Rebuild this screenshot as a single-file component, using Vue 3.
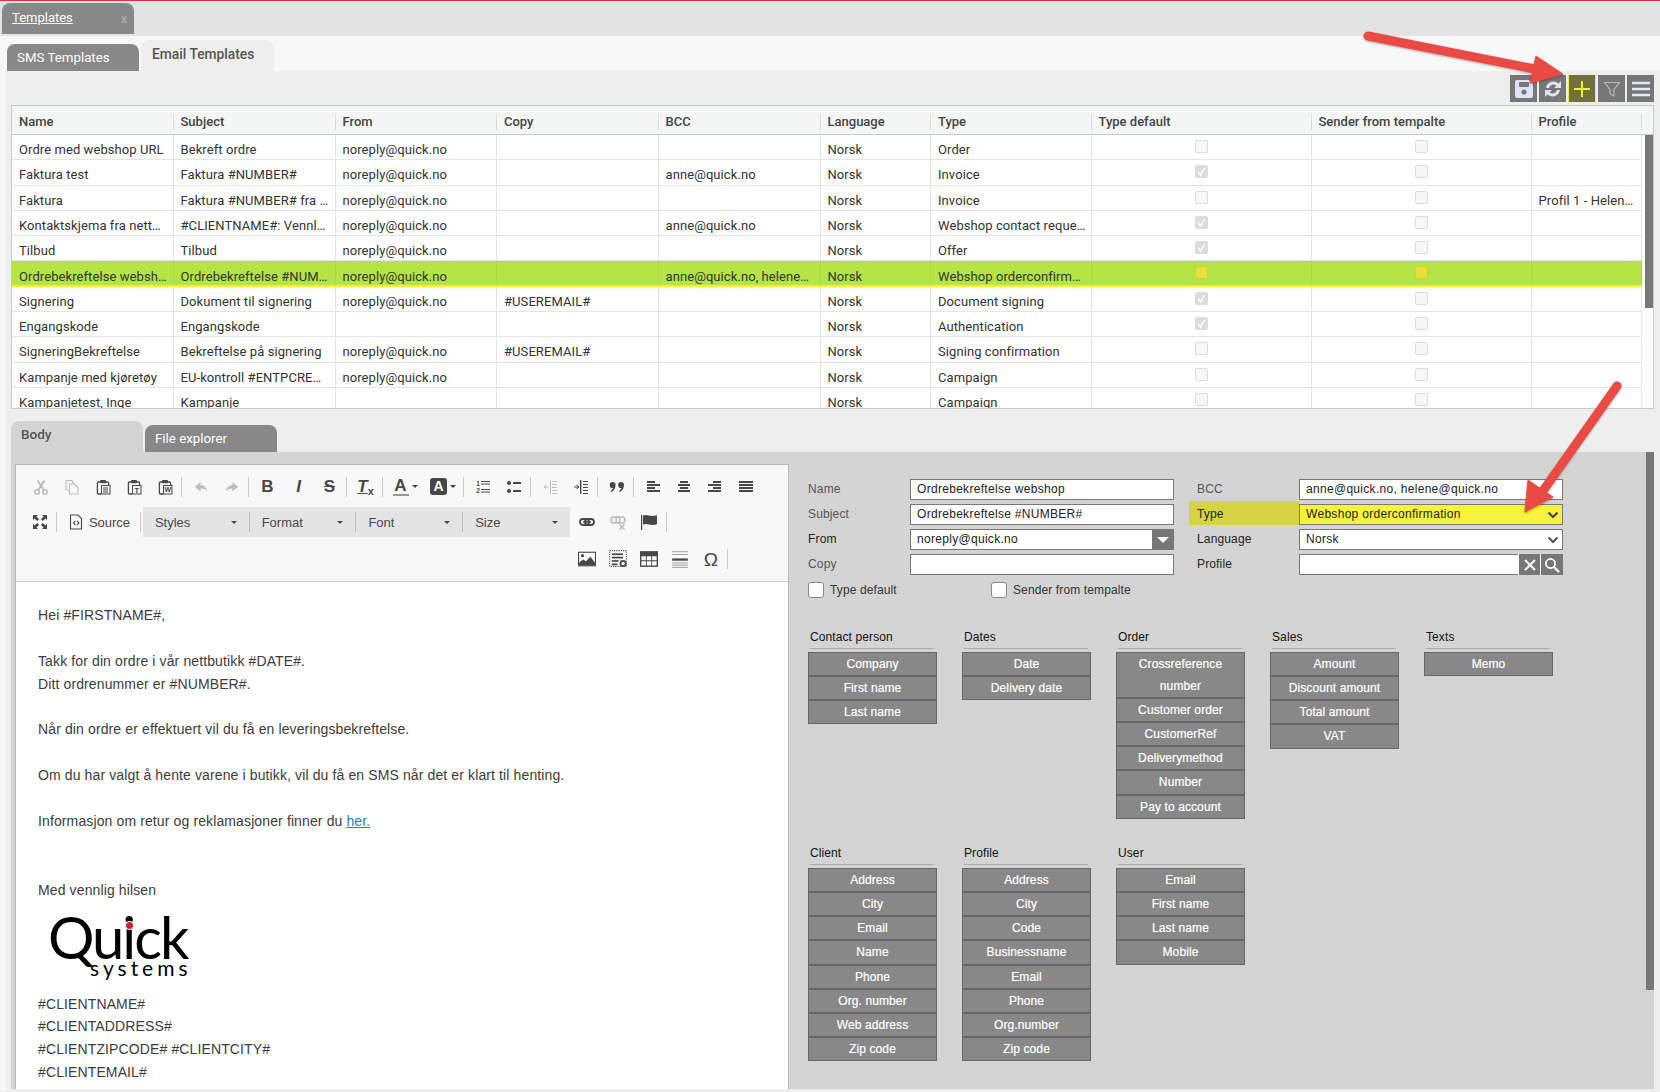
<script setup>
const cols = ['Name', 'Subject', 'From', 'Copy', 'BCC', 'Language', 'Type', 'Type default', 'Sender from tempalte', 'Profile']
const NR = 'noreply@quick.no'
const rows = [
  ['Ordre med webshop URL', 'Bekreft ordre', NR, '', '', 'Order', 0, ''],
  ['Faktura test', 'Faktura #NUMBER#', NR, '', 'anne@quick.no', 'Invoice', 1, ''],
  ['Faktura', 'Faktura #NUMBER# fra ...', NR, '', '', 'Invoice', 0, 'Profil 1 - Helene Hansen'],
  ['Kontaktskjema fra nettbutikk', '#CLIENTNAME#: Vennl…', NR, '', 'anne@quick.no', 'Webshop contact request', 1, ''],
  ['Tilbud', 'Tilbud', NR, '', '', 'Offer', 1, ''],
  ['Ordrebekreftelse webshop', 'Ordrebekreftelse #NUMBER#', NR, '', 'anne@quick.no, helene@quick.no', 'Webshop orderconfirmation', 0, ''],
  ['Signering', 'Dokument til signering', NR, '#USEREMAIL#', '', 'Document signing', 1, ''],
  ['Engangskode', 'Engangskode', '', '', '', 'Authentication', 1, ''],
  ['SigneringBekreftelse', 'Bekreftelse på signering', NR, '#USEREMAIL#', '', 'Signing confirmation', 0, ''],
  ['Kampanje med kjøretøy', 'EU-kontroll #ENTPCRE…', NR, '', '', 'Campaign', 0, ''],
  ['Kampanjetest, Inge', 'Kampanje', '', '', '', 'Campaign', 0, '']
]
const S = 'fill="none" stroke="currentColor"'
const F = 'fill="currentColor"'
const clip = `<path d="M5 3H3.4a1 1 0 0 0-1 1v10a1 1 0 0 0 1 1H6M11 3h1.6a1 1 0 0 1 1 1v2" ${S} stroke-width="1.3"/><rect x="5" y="1" width="6" height="3.2" rx=".8" ${F}/><rect x="6.5" y="6.5" width="8.5" height="8.5" ${S}/>`
const txt = (c, x, y, s, w = 700) => `<text x="${x}" y="${y}" font-family="Liberation Sans" font-size="${s}" font-weight="${w}" text-anchor="middle" ${F}>${c}</text>`
const bars = (a) => a.map(([x, y, w, h]) => `<rect x="${x}" y="${y}" width="${w}" height="${h || 2}" ${F}/>`).join('')
const icons = {
  cut: `<circle cx="4" cy="13" r="2.2" ${S} stroke-width="1.6"/><circle cx="12" cy="13" r="2.2" ${S} stroke-width="1.6"/><path d="M5.2 11 11.5 1.5M10.8 11 4.5 1.5" ${S} stroke-width="2"/>`,
  copy: `<path d="M5.5 11H2V1.5h5.5L9 3v2M5.5 5h5l3.5 3.5v6.5H5.5z" ${S} stroke-width="1.1"/>`,
  paste: clip + bars([[8, 8.5, 5, 1], [8, 10.5, 5, 1], [8, 12.5, 5, 1]]),
  pasteT: clip + txt('T', 10.8, 13.6, 7.5),
  pasteW: clip + txt('W', 10.8, 13.4, 7),
  undo: `<path d="M7.5 3 2 7.8l5.5 4.7V9.6c3 0 5 .6 6.7 2.8-.5-3.8-2.8-6.3-6.7-6.5z" ${F}/>`,
  redo: `<path d="M8.5 3 14 7.8l-5.5 4.7V9.6c-3 0-5 .6-6.7 2.8.5-3.8 2.8-6.3 6.7-6.5z" ${F}/>`,
  ol: txt('1', 3, 6.5, 6.5) + txt('2', 3, 14, 6.5) + bars([[6, 2, 9, 1], [6, 4.5, 9, 1], [6, 10, 9, 1], [6, 12.5, 9, 1]]),
  ul: `<circle cx="3" cy="4" r="2" ${F}/><circle cx="3" cy="12" r="2" ${F}/>` + bars([[7, 3, 8, 2], [7, 11, 8, 2]]),
  outdent: `<rect x="8" y="1" width="1" height="14" ${F}/><path d="M6.5 8H2.5M4.5 6 2 8l2.5 2" ${S}/>` + bars([[10, 2, 5, 1], [10, 5, 5, 1], [10, 8, 5, 1], [10, 11, 5, 1], [10, 14, 5, 1]]),
  indent: `<rect x="7" y="1" width="1.4" height="14" ${F}/><path d="M1 8h4.5M3.5 6 6 8l-2.5 2" ${S}/>` + bars([[10, 2, 5, 1], [10, 5, 5, 1], [10, 8, 5, 1], [10, 11, 5, 1], [10, 14, 5, 1]]),
  quote: `<path d="M3.6 3a3 3 0 0 1 3 3c0 3.4-1.8 5.8-4.4 7l-.6-1c1.4-1 2.1-2 2.3-3A3 3 0 0 1 3.6 3zM12 3a3 3 0 0 1 3 3c0 3.4-1.8 5.8-4.4 7l-.6-1c1.4-1 2.1-2 2.3-3A3 3 0 0 1 12 3z" ${F}/>`,
  left: bars([[2, 2, 8], [2, 5, 13], [2, 8, 8], [2, 11, 13]]),
  center: bars([[4, 2, 8], [2, 5, 12], [4, 8, 8], [2, 11, 12]]),
  right: bars([[6, 2, 8], [1, 5, 13], [6, 8, 8], [1, 11, 13]]),
  just: bars([[1, 2, 14], [1, 5, 14], [1, 8, 14], [1, 11, 14]]),
  max: `<path d="M1 1h5L4.4 2.6 7 5.2 5.2 7 2.6 4.4 1 6zM15 1v5l-1.6-1.6L10.8 7 9 5.2l2.6-2.6L10 1zM1 15v-5l1.6 1.6L5.2 9 7 10.8l-2.6 2.6L6 15zM15 15h-5l1.6-1.6L9 10.8 10.8 9l2.6 2.6L15 10z" ${F}/>`,
  source: `<path d="M2.5 1h7.5l3.5 3.5V15h-11z" ${S} stroke-width="1.1"/><path d="M7 6.5 4.8 9 7 11.5l.8-.7L6.3 9l1.5-1.8zM9.4 6.5l2.2 2.5-2.2 2.5-.8-.7L10.1 9 8.6 7.2z" ${F}/>`,
  link: `<rect x="1" y="5" width="9" height="6" rx="3" ${S} stroke-width="1.8"/><rect x="6" y="5" width="9" height="6" rx="3" ${S} stroke-width="1.8"/><rect x="4" y="7.2" width="8" height="1.6" ${F}/>`,
  unlink: `<rect x="1" y="3" width="9" height="6" rx="3" ${S} stroke-width="1.6"/><rect x="6" y="3" width="9" height="6" rx="3" ${S} stroke-width="1.6"/><path d="M9.5 10.5l5 5M14.5 10.5l-5 5" ${S} stroke-width="1.6"/>`,
  flag: `<rect x="0" y="1" width="1.2" height="15" ${F}/><path d="M2 1.5c2.500-1 4-.6 6 0s4 .6 8-.2v9c-3.500 1-6 .8-8 .2s-3.500-.8-6 0z" ${F}/>`,
  image: `<rect x=".5" y="2" width="15" height="12" fill="#fff" stroke="currentColor"/><circle cx="4" cy="5" r="1.4" ${F}/><path d="M1 13.5V11l3.5-2.5 2.5 1.5 4-4 4 5v2.5z" ${F}/>`,
  iframe: `<rect x=".5" y=".5" width="15" height="14" ${S} stroke-dasharray="1 1"/>` + bars([[2.5, 3, 10, 1.5], [2.5, 6, 10, 1.5], [2.5, 9, 6, 1.5], [2.5, 12, 5, 1.5]]) + `<circle cx="12.5" cy="12" r="2.3" ${S} stroke-width="1.5"/>`,
  table: `<path d="M0 1h16v14H0z" ${F}/><path d="M1.2 5.5h4v3.5h-4zM6 5.5h4v3.5H6zM10.8 5.5h4v3.5h-4zM1.2 10h4v3.8h-4zM6 10h4v3.8H6zM10.8 10h4v3.8h-4z" fill="#f8f8f8"/>`,
  hr: `<g opacity=".45">` + bars([[1, 1, 14, 1], [1, 3.5, 14, 1], [1, 11, 14, 1], [1, 13, 14, 1], [1, 15, 14, 1]]) + `</g>` + bars([[1, 7.5, 14, 2]]),
  omega: `<text x="8" y="14" font-family="Liberation Sans" font-size="17" text-anchor="middle" ${F}>Ω</text>`
}
const row1 = [
  ['cut', 1], ['copy', 1], ['paste'], ['pasteT'], ['pasteW'], '|',
  ['undo', 1], ['redo', 1], '|',
  ['@B'], ['@I'], ['@S'], '|', ['@T'], '|', ['@A'], ['@H'], '|',
  ['ol'], ['ul'], '|', ['outdent', 1], ['indent'], '|', ['quote'], '|',
  ['left'], ['center'], ['right'], ['just']
]
const combos = ['Styles', 'Format', 'Font', 'Size']
const row2b = [['link'], ['unlink', 1], ['flag'], '|']
const row3 = [['image'], ['iframe'], ['table'], ['hr'], ['omega'], '|']
const left = [['Name', 'Ordrebekreftelse webshop'], ['Subject', 'Ordrebekreftelse #NUMBER#'], ['From', NR], ['Copy', '']]
const groups = [
  ['Contact person', ['Company', 'First name', 'Last name']],
  ['Dates', ['Date', 'Delivery date']],
  ['Order', ['Crossreference number', 'Customer order', 'CustomerRef', 'Deliverymethod', 'Number', 'Pay to account']],
  ['Sales', ['Amount', 'Discount amount', 'Total amount', 'VAT']],
  ['Texts', ['Memo']],
  ['Client', ['Address', 'City', 'Email', 'Name', 'Phone', 'Org. number', 'Web address', 'Zip code']],
  ['Profile', ['Address', 'City', 'Code', 'Businessname', 'Email', 'Phone', 'Org.number', 'Zip code']],
  ['User', ['Email', 'First name', 'Last name', 'Mobile']]
]
const body = [
  'Hei #FIRSTNAME#,', '', 'Takk for din ordre i vår nettbutikk #DATE#.', 'Ditt ordrenummer er #NUMBER#.', '',
  'Når din ordre er effektuert vil du få en leveringsbekreftelse.', '',
  'Om du har valgt å hente varene i butikk, vil du få en SMS når det er klart til henting.', ''
]
const foot = ['#CLIENTNAME#', '#CLIENTADDRESS#', '#CLIENTZIPCODE# #CLIENTCITY#', '#CLIENTEMAIL#']
</script>

<template>
  <div class="page">
    <div class="topbar">
      <div class="maintab"><span class="maintab-t">Templates</span><span class="x">x</span></div>
    </div>
    <div class="subbar">
      <div class="subtab off">SMS Templates</div>
      <div class="subtab on">Email Templates</div>
    </div>
    <div class="main">
      <div class="actions">
        <button class="act"><svg width="20" height="20" viewBox="0 0 20 20"><path d="M3 1h12l4 4v12a2 2 0 0 1-2 2H3a2 2 0 0 1-2-2V3a2 2 0 0 1 2-2z" fill="#dfe3f8"/><rect x="5" y="3" width="10" height="5" rx="1" fill="#777"/><circle cx="10" cy="13" r="2.6" fill="#777"/></svg></button>
        <button class="act"><svg width="20" height="20" viewBox="0 0 20 20" fill="#dfe3f8"><path d="M3 9a7.5 7.5 0 0 1 12.5-4.5L18 2v7h-7l2.5-2.5A4.700 4.700 0 0 0 6 9zM17 11a7.500 7.500 0 0 1-12.500 4.500L2 18v-7h7l-2.500 2.500A4.700 4.700 0 0 0 14 11z"/></svg></button>
        <button class="act add"><svg width="18" height="18" viewBox="0 0 18 18"><path d="M9 1v16M1 9h16" stroke="#eeee33" stroke-width="2"/></svg></button>
        <button class="act"><svg width="18" height="18" viewBox="0 0 18 18"><path d="M1.5 2.5h15L11 9.5V16L7 14V9.5z" fill="none" stroke="#bbb" stroke-width="1.2"/></svg></button>
        <button class="act"><svg width="20" height="18" viewBox="0 0 20 18"><path d="M1 3h18M1 9h18M1 15h18" stroke="#e4e6fa" stroke-width="2.4"/></svg></button>
      </div>

      <div class="grid">
        <div class="tr head">
          <div v-for="c in cols" :key="c" class="th">{{ c }}</div>
        </div>
        <div v-for="(r, i) in rows" :key="i" class="tr row" :class="{ sel: i === 5 }">
          <div class="td">{{ r[0] }}</div>
          <div class="td">{{ r[1] }}</div>
          <div class="td">{{ r[2] }}</div>
          <div class="td">{{ r[3] }}</div>
          <div class="td">{{ r[4] }}</div>
          <div class="td">Norsk</div>
          <div class="td">{{ r[5] }}</div>
          <div class="td mid"><span class="cb" :class="{ ck: r[6] }"><svg v-if="r[6]" width="11" height="11" viewBox="0 0 11 11"><path d="M2.5 6 4.5 9 8.5 2" fill="none" stroke="#fff" stroke-width="1.5"/></svg></span></div>
          <div class="td mid"><span class="cb"></span></div>
          <div class="td">{{ r[7] }}</div>
        </div>
        <div class="gridbar"></div>
      </div>

      <div class="lowertabs">
        <div class="ltab on">Body</div>
        <div class="ltab off">File explorer</div>
      </div>

      <div class="panel">
        <div class="editor">
          <div class="etools">
            <div class="erow r1">
              <template v-for="(it, i) in row1" :key="i">
                <span v-if="it === '|'" class="sep"></span>
                <span v-else-if="it[0] === '@B'" class="slot g gb">B</span>
                <span v-else-if="it[0] === '@I'" class="slot g gi">I</span>
                <span v-else-if="it[0] === '@S'" class="slot g gs">S</span>
                <span v-else-if="it[0] === '@T'" class="slot g gt"><span class="gti">T</span><span class="gtx">x</span></span>
                <span v-else-if="it[0] === '@A'" class="slot wide"><span class="ga">A</span><i class="caret"></i></span>
                <span v-else-if="it[0] === '@H'" class="slot wide"><span class="gh">A</span><i class="caret"></i></span>
                <span v-else class="slot" :class="{ dis: it[1] }"><svg width="16" height="16" viewBox="0 0 16 16" v-html="icons[it[0]]"></svg></span>
              </template>
            </div>
            <div class="erow r2">
              <span class="slot"><svg width="16" height="16" viewBox="0 0 16 16" v-html="icons.max"></svg></span>
              <span class="sep"></span>
              <span class="srcbtn"><svg width="16" height="16" viewBox="0 0 16 16" v-html="icons.source"></svg><span>Source</span></span>
              <span class="sep"></span>
              <div class="combos">
                <div v-for="c in combos" :key="c" class="combo"><span>{{ c }}</span><i class="caret"></i></div>
              </div>
              <div class="r2b">
                <template v-for="(it, i) in row2b" :key="i">
                  <span v-if="it === '|'" class="sep"></span>
                  <span v-else class="slot" :class="{ dis: it[1] }"><svg width="16" height="16" viewBox="0 0 16 16" v-html="icons[it[0]]"></svg></span>
                </template>
              </div>
            </div>
            <div class="erow r3">
              <template v-for="(it, i) in row3" :key="i">
                <span v-if="it === '|'" class="sep"></span>
                <span v-else class="slot"><svg width="18" height="18" viewBox="0 0 16 16" v-html="icons[it[0]]"></svg></span>
              </template>
            </div>
          </div>
          <div class="ebody">
            <div v-for="(l, i) in body" :key="i" class="ln">{{ l }}</div>
            <div class="ln">Informasjon om retur og reklamasjoner finner du <a class="lnk">her.</a></div>
            <div class="ln"></div>
            <div class="ln"></div>
            <div class="ln">Med vennlig hilsen</div>
            <div class="logo">
              <div class="lq">Quick<i class="dot"></i></div>
              <div class="ls">systems</div>
            </div>
            <div v-for="l in foot" :key="l" class="ln">{{ l }}</div>
          </div>
        </div>

        <div class="form">
          <div class="fields">
            <div class="fcol lcol">
              <div v-for="f in left" :key="f[0]" class="frow">
                <label class="fl" :class="{ dark: f[0] === 'From' }">{{ f[0] }}</label>
                <div class="inp">
                  <span class="val">{{ f[1] }}</span>
                  <span v-if="f[0] === 'From'" class="ddbtn"><i class="tri"></i></span>
                </div>
              </div>
            </div>
            <div class="fcol rcol">
              <div class="frow"><label class="fl">BCC</label><div class="inp"><span class="val">anne@quick.no, helene@quick.no</span></div></div>
              <div class="frow hl"><label class="fl dark">Type</label><div class="inp yellow"><span class="val">Webshop orderconfirmation</span><svg class="chev" width="12" height="8" viewBox="0 0 12 8"><path d="M1.5 1.5 6 6l4.5-4.5" fill="none" stroke="#444" stroke-width="2.2"/></svg></div></div>
              <div class="frow"><label class="fl dark">Language</label><div class="inp"><span class="val">Norsk</span><svg class="chev" width="12" height="8" viewBox="0 0 12 8"><path d="M1.5 1.5 6 6l4.5-4.5" fill="none" stroke="#555" stroke-width="2.2"/></svg></div></div>
              <div class="frow"><label class="fl dark">Profile</label><div class="inp"><span class="val"></span>
                <span class="pbtn"><svg width="14" height="14" viewBox="0 0 14 14"><path d="M2 2l10 10M12 2 2 12" stroke="#fff" stroke-width="2"/></svg></span>
                <span class="pbtn"><svg width="16" height="16" viewBox="0 0 16 16"><circle cx="6.5" cy="6.5" r="4.6" fill="none" stroke="#fff" stroke-width="1.7"/><path d="M10 10l5 5" stroke="#fff" stroke-width="2.2"/></svg></span>
              </div></div>
            </div>
          </div>
          <div class="checks">
            <span class="chk c1"><i class="box"></i>Type default</span>
            <span class="chk"><i class="box"></i>Sender from tempalte</span>
          </div>
          <div class="groups">
            <div v-for="g in groups" :key="g[0]" class="grp">
              <div class="gtitle">{{ g[0] }}</div>
              <div v-for="b in g[1]" :key="b" class="gbtn" :class="{ two: b === 'Crossreference number' }">{{ b }}</div>
            </div>
          </div>
        </div>
        <div class="panelbar"></div>
      </div>
    </div>

    <svg class="arrows" width="1660" height="1092" viewBox="0 0 1660 1092">
      <g fill="#ea4a44" stroke="#ea4a44">
        <path d="M1368 36 1540 70" stroke-width="9" stroke-linecap="round"/>
        <path d="M1563 74 1536 56 1530 83z" stroke-width="1"/>
        <path d="M1617 386 1540 495" stroke-width="9" stroke-linecap="round"/>
        <path d="M1525 512 1528 480 1553 497z" stroke-width="1"/>
      </g>
    </svg>
  </div>
</template>

<style>
html, body { margin: 0; background: #eeeeee; }
</style>

<style scoped>
.page { position: relative; width: 1660px; height: 1092px; overflow: hidden; background: #eeeeee; border-top: 1px solid #d8343a; box-sizing: border-box; font-family: Roboto, "Liberation Sans", sans-serif; font-size: 13px; color: #333; }
.topbar { height: 35px; background: #e3e3e3; padding: 2px 0 0 2px; box-sizing: border-box; }
.maintab { width: 132px; height: 31px; background: #888; border-radius: 8px 8px 0 0; display: flex; align-items: center; justify-content: space-between; padding: 0 7px 2px 10px; box-sizing: border-box; }
.maintab-t { color: #fff; text-decoration: underline; font-size: 13px; }
.x { color: #aaa; font-weight: 700; font-size: 12px; margin-top: 2px; }
.subbar { height: 35px; background: #f8f8f8; display: flex; align-items: flex-end; gap: 2px; padding-left: 7px; box-sizing: border-box; }
.subtab { width: 132px; border-radius: 8px 8px 0 0; box-sizing: border-box; padding-left: 10px; }
.subtab.off { height: 27px; background: #888; color: #fff; line-height: 28px; font-size: 13.3px; }
.subtab.on { height: 31px; background: #eeeeee; color: #555; font-weight: 500; line-height: 28px; width: 133px; font-size: 13.8px; padding-left: 11px; }
.main { height: 1020px; border-left: 6px solid #f8f8f8; padding-left: 5px; box-sizing: border-box; }
.actions { height: 34px; display: flex; justify-content: flex-end; padding: 4px 6px 3px 0; box-sizing: border-box; gap: 2px; }
.act { width: 27px; height: 27px; border: 0; padding: 0; background: #777; display: flex; align-items: center; justify-content: center; }
.act.add { width: 28px; background: #70703c; border-left: 1px solid #eeee33; border-right: 1px solid #eeee33; }
.grid { position: relative; width: 1643px; height: 304px; border: 1px solid #c6cccc; box-sizing: border-box; background: #fff; overflow: hidden; }
.tr { display: grid; grid-template-columns: 161.5px 162px 161.5px 161.5px 162px 110.5px 160.5px 220px 220px 110px; }
.head { height: 29px; background: #f4f6f6; border-bottom: 1px solid #c6cccc; box-sizing: border-box; align-items: center; padding-top: 3px; }
.th { height: 16px; line-height: 16px; padding-left: 7px; border-right: 1px solid #d8dcdc; color: #444; font-weight: 500; box-sizing: border-box; }
.row { height: 25.3px; box-sizing: border-box; border-bottom: 1px solid #e4e6e6; width: 1630px; }
.td { padding: 5px 5px 0 7px; line-height: 20px; border-right: 1px solid #e4e6e6; white-space: nowrap; overflow: hidden; text-overflow: ellipsis; box-sizing: border-box; color: #333; letter-spacing: .08px; }
.mid { padding: 0; display: flex; justify-content: center; align-items: flex-start; overflow: visible; }
.cb { margin-top: 5px; width: 13px; height: 13px; border: 1px solid #dcdcdc; background: #f7f7f7; border-radius: 2px; display: flex; align-items: center; justify-content: center; box-sizing: border-box; }
.cb.ck { background: #dcdcdc; }
.sel { background: #b5e544; border-bottom: 2px solid #f2ee3a; }
.sel .td { border-right-color: #a9d83f; color: #333; padding-top: 6px; }
.sel .mid { padding-top: 0; }
.sel .cb { background: #e8e03a; border-color: #cfd23c; }
.gridbar { position: absolute; right: 0; top: 29px; width: 8px; height: 173px; background: #777; }
.lowertabs { display: flex; align-items: flex-end; gap: 2px; height: 43px; }
.ltab { width: 132px; border-radius: 8px 8px 0 0; box-sizing: border-box; padding-left: 10px; }
.ltab.on { height: 31px; background: #d4d4d4; color: #555; font-weight: 500; line-height: 27px; font-size: 13.5px; }
.ltab.off { height: 27px; background: #888; color: #fff; line-height: 28px; font-size: 13.3px; }
.panel { position: relative; width: 1643px; height: 637px; background: #d4d4d4; display: flex; padding: 12px 0 0 4px; box-sizing: border-box; }
.panelbar { position: absolute; right: 0; top: 0; width: 8px; height: 538px; background: #777; }
.editor { width: 774px; height: 625px; background: #fff; border: 1px solid #b8b8b8; border-bottom: 0; box-sizing: border-box; overflow: hidden; flex: none; }
.etools { height: 117px; background: #f8f8f8; border-bottom: 1px solid #ccc; box-sizing: border-box; padding-top: 4px; }
.erow { display: flex; align-items: center; height: 30px; }
.r1 { height: 35px; padding-left: 9px; }
.r2 { padding-left: 8px; margin-top: 3px; }
.r2b { display: flex; align-items: center; margin-left: 2px; }
.r3 { padding-left: 555px; margin-top: 7px; }
.slot { width: 31px; height: 24px; display: flex; align-items: center; justify-content: center; color: #474747; flex: none; }
.slot.wide { width: 38px; gap: 3px; }
.slot.dis { color: #bcbcbc; }
.sep { width: 1px; height: 20px; background: #c8c8c8; margin: 0 3px 0 1px; flex: none; }
.g { font-family: "Liberation Sans", sans-serif; font-size: 17px; }
.gb { font-weight: 700; }
.gi { font-style: italic; font-weight: 700; }
.gs { font-weight: 700; text-decoration: line-through; }
.gt { position: relative; }
.gti { font-style: italic; font-weight: 700; text-decoration: underline; }
.gtx { font-size: 11px; font-weight: 700; margin-top: 8px; }
.ga { font: 700 17px/17px "Liberation Sans", sans-serif; border-bottom: 2px solid #999; height: 17px; color: #474747; width: 16px; text-align: center; }
.gh { font: 700 14px/17px "Liberation Sans", sans-serif; background: #474747; color: #fff; width: 17px; height: 17px; border-radius: 3px; text-align: center; }
.caret { width: 0; height: 0; border: 3px solid transparent; border-top-color: #474747; border-bottom: 0; flex: none; }
.srcbtn { display: flex; align-items: center; gap: 5px; padding: 0 9px 0 8px; color: #474747; font: 13px "Liberation Sans", sans-serif; letter-spacing: -.05px; }
.combos { display: flex; background: #e4e4e4; height: 30px; width: 427px; flex: none; align-items: center; margin-left: -1px; }
.combo { width: 106.75px; height: 20px; display: flex; align-items: center; justify-content: space-between; padding: 0 12px 0 12px; box-sizing: border-box; border-right: 1px solid #c0c0c0; font: 13px "Liberation Sans", sans-serif; color: #484848; }
.combo:last-child { border-right: 0; }
.ebody { padding: 22px 0 0 22px; font: 14px/22.9px "Liberation Sans", sans-serif; color: #3c3c3c; letter-spacing: .12px; }
.ln { height: 22.9px; white-space: nowrap; }
.lnk { color: #2a7fc4; text-decoration: underline; }
.logo { height: 91px; color: #000; font-family: Lato, sans-serif; letter-spacing: 0; }
.lq { position: relative; font-size: 58px; line-height: 58px; height: 58px; margin-left: 10px; padding-top: 6px; letter-spacing: -2px; width: 140px; }
.dot { position: absolute; left: 78px; top: 20px; width: 7px; height: 7px; border-radius: 50%; background: #d0202a; box-shadow: 0 0 0 1px #fff; }
.ls { font-size: 21px; line-height: 14px; letter-spacing: 4px; margin-left: 52px; margin-top: -5px; }
.form { flex: 1; font: 12px "Liberation Sans", sans-serif; padding: 12px 0 0 19px; color: #444; }
.fields { display: flex; gap: 15px; }
.fcol { display: flex; flex-direction: column; }
.lcol { width: 366px; }
.frow { height: 25px; display: flex; align-items: flex-end; padding-bottom: 1px; box-sizing: border-box; }
.fl { width: 102px; height: 21px; line-height: 20px; color: #555; flex: none; letter-spacing: .15px; }
.fl.dark { color: #222; }
.rcol .fl { width: 102px; margin-left: 8px; }
.hl { position: relative; }
.hl .fl { margin: 0; width: 110px; padding-left: 8px; height: 24px; line-height: 26px; background: #d6d443; box-sizing: border-box; }
.inp { width: 264px; height: 21px; background: #fff; border: 1px solid #777; box-sizing: border-box; display: flex; align-items: center; flex: none; }
.val { flex: 1; padding: 0 0 2px 6px; color: #222; letter-spacing: .3px; white-space: nowrap; }
.yellow { background: #f5f33c; }
.chev { margin-right: 3px; }
.ddbtn { width: 22px; height: 21px; margin-right: -1px; background: #777; display: flex; align-items: center; justify-content: center; }
.tri { width: 0; height: 0; border: 6px solid transparent; border-top: 6px solid #fff; border-bottom: 0; }
.pbtn { width: 21px; height: 21px; background: #777; display: flex; align-items: center; justify-content: center; border-left: 1px solid #fff; }
.checks { display: flex; margin-top: 6px; height: 16px; align-items: center; letter-spacing: .12px; color: #333; }
.chk { display: flex; align-items: center; gap: 6px; }
.c1 { width: 183px; }
.box { width: 16px; height: 16px; background: #fff; border: 1px solid #888; border-radius: 3px; box-sizing: border-box; flex: none; }
.groups { display: grid; grid-template-columns: repeat(5, 129px); grid-template-rows: 216px auto; column-gap: 25px; margin-top: 30px; }
.grp { display: flex; flex-direction: column; }
.gtitle { height: 21px; line-height: 18px; margin: 0 3px 3px 2px; border-bottom: 1px solid #aaa; color: #111; box-sizing: border-box; letter-spacing: .1px; }
.gbtn { height: 24.15px; line-height: 23px; background: #888; border: 1px solid #666; box-sizing: border-box; color: #fff; text-align: center; -webkit-text-stroke: .2px #fff; letter-spacing: .1px; }
.gbtn.two { height: 46px; line-height: 22px; padding: 0 20px; }
.arrows { position: absolute; left: 0; top: -1px; pointer-events: none; filter: drop-shadow(0 1px 1px rgba(0,0,0,.3)); }
</style>
